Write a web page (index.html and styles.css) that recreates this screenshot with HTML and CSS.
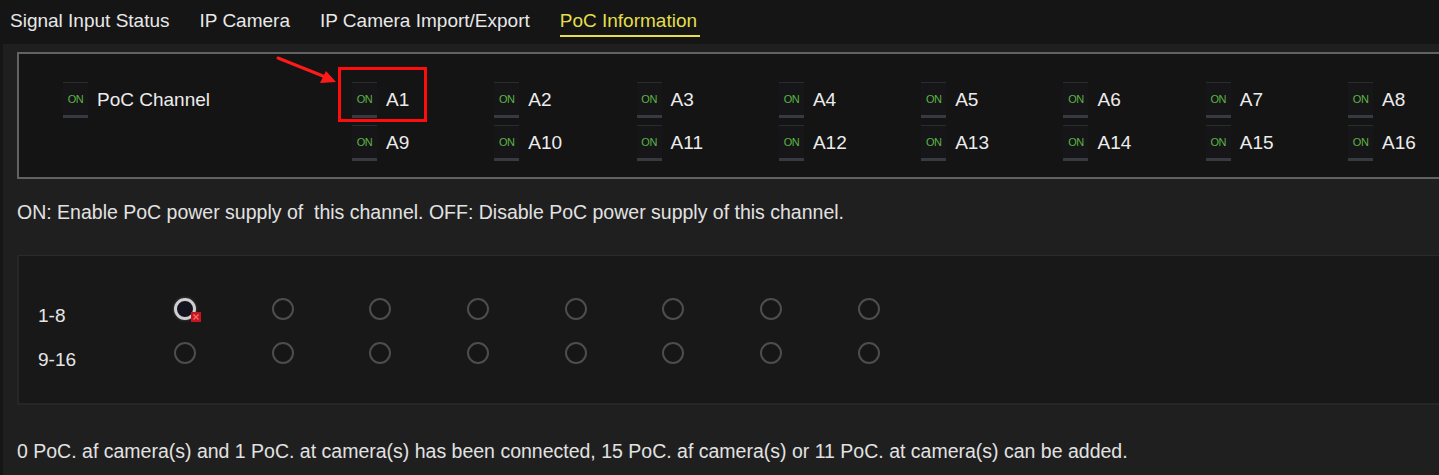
FILE: index.html
```html
<!DOCTYPE html>
<html>
<head>
<meta charset="utf-8">
<link rel="stylesheet" href="styles.css">
</head>
<body>
<div class="page">
  <div class="tabs">
    <span class="tab">Signal Input Status</span>
    <span class="tab">IP Camera</span>
    <span class="tab">IP Camera Import/Export</span>
    <span class="tab active">PoC Information</span>
  </div>
  <div class="content">
    <div class="chbox">
      <div class="chhead">
        <div class="item"><span class="tgl">ON</span><span class="lbl">PoC Channel</span></div>
      </div>
      <div class="chgrid">
        <div class="item"><span class="tgl">ON</span><span class="lbl">A1</span></div>
        <div class="item"><span class="tgl">ON</span><span class="lbl">A2</span></div>
        <div class="item"><span class="tgl">ON</span><span class="lbl">A3</span></div>
        <div class="item"><span class="tgl">ON</span><span class="lbl">A4</span></div>
        <div class="item"><span class="tgl">ON</span><span class="lbl">A5</span></div>
        <div class="item"><span class="tgl">ON</span><span class="lbl">A6</span></div>
        <div class="item"><span class="tgl">ON</span><span class="lbl">A7</span></div>
        <div class="item"><span class="tgl">ON</span><span class="lbl">A8</span></div>
        <div class="item"><span class="tgl">ON</span><span class="lbl">A9</span></div>
        <div class="item"><span class="tgl">ON</span><span class="lbl">A10</span></div>
        <div class="item"><span class="tgl">ON</span><span class="lbl">A11</span></div>
        <div class="item"><span class="tgl">ON</span><span class="lbl">A12</span></div>
        <div class="item"><span class="tgl">ON</span><span class="lbl">A13</span></div>
        <div class="item"><span class="tgl">ON</span><span class="lbl">A14</span></div>
        <div class="item"><span class="tgl">ON</span><span class="lbl">A15</span></div>
        <div class="item"><span class="tgl">ON</span><span class="lbl">A16</span></div>
      </div>
    </div>
    <p class="note">ON: Enable PoC power supply of &nbsp;this channel. OFF: Disable PoC power supply of this channel.</p>
    <div class="radiobox">
      <div class="rrow">
        <span class="rlbl">1-8</span>
        <span class="cell"><span class="radio sel"><svg class="xmark" width="10" height="10" viewBox="0 0 10 10"><rect x="0" y="0" width="10" height="10" fill="#c4161c"/><path d="M2.5 2.5 L7.5 7.5 M7.5 2.5 L2.5 7.5" stroke="#ff6a6a" stroke-width="1.4"/></svg></span></span>
        <span class="cell"><span class="radio"></span></span>
        <span class="cell"><span class="radio"></span></span>
        <span class="cell"><span class="radio"></span></span>
        <span class="cell"><span class="radio"></span></span>
        <span class="cell"><span class="radio"></span></span>
        <span class="cell"><span class="radio"></span></span>
        <span class="cell"><span class="radio"></span></span>
      </div>
      <div class="rrow">
        <span class="rlbl">9-16</span>
        <span class="cell"><span class="radio"></span></span>
        <span class="cell"><span class="radio"></span></span>
        <span class="cell"><span class="radio"></span></span>
        <span class="cell"><span class="radio"></span></span>
        <span class="cell"><span class="radio"></span></span>
        <span class="cell"><span class="radio"></span></span>
        <span class="cell"><span class="radio"></span></span>
        <span class="cell"><span class="radio"></span></span>
      </div>
    </div>
    <p class="status">0 PoC. af camera(s) and 1 PoC. at camera(s) has been connected, 15 PoC. af camera(s) or 11 PoC. at camera(s) can be added.</p>
  </div>
  <div class="hl-box"></div>
  <svg class="hl-arrow" width="80" height="40" viewBox="0 0 80 40">
    <line x1="2" y1="2" x2="52" y2="22" stroke="#ff1a1a" stroke-width="3" stroke-linecap="round"/>
    <polygon points="60,26 44,27 50,15" fill="#ff1a1a"/>
  </svg>
</div>
</body>
</html>
```
FILE: styles.css
```css
html, body {
  margin: 0;
  padding: 0;
  background: #1f1f1f;
  overflow: hidden;
}
.page {
  position: relative;
  width: 1439px;
  height: 475px;
  font-family: "Liberation Sans", Arial, sans-serif;
  color: #e6e6e6;
  border-left: 3px solid #151515;
  box-sizing: border-box;
}
.tabs {
  height: 44px;
  background: #151515;
  display: flex;
  gap: 30px;
  padding-left: 7px;
  box-sizing: border-box;
}
.tab {
  font-size: 19px;
  line-height: 24px;
  padding-top: 9px;
  height: 26px;
  color: #e8e8e8;
  white-space: nowrap;
}
.tab.active {
  color: #e3df4c;
  border-bottom: 2px solid #e3df4c;
  padding-right: 3px;
}
.content {
  padding-left: 14px;
}
.chbox {
  margin-top: 8px;
  margin-right: -20px;
  height: 127px;
  box-sizing: border-box;
  border: 2px solid #626262;
  background: #141414;
  display: flex;
  padding-top: 24px;
}
.chhead {
  width: 333px;
  padding-left: 44px;
  box-sizing: border-box;
  flex: none;
}
.chgrid {
  display: grid;
  grid-template-columns: repeat(8, 142.3px);
  grid-auto-rows: 43px;
}
.item {
  display: flex;
  align-items: center;
  height: 43px;
}
.tgl {
  width: 25px;
  height: 36px;
  box-sizing: border-box;
  border-top: 1px solid #2a2b2f;
  border-bottom: 3px solid #383a42;
  background: #161619;
  color: #5bb443;
  font-size: 11px;
  line-height: 32px;
  text-align: center;
  letter-spacing: -0.5px;
  flex: none;
}
.lbl {
  margin-left: 9px;
  font-size: 19px;
  color: #ececec;
  white-space: nowrap;
}
.note {
  margin: 22px 0 0 0;
  font-size: 19.5px;
  line-height: 22px;
  color: #e2e2e2;
  white-space: nowrap;
}
.radiobox {
  margin-top: 32px;
  margin-right: -20px;
  height: 150px;
  box-sizing: border-box;
  background: #181818;
  border-top: 1px solid #2a2a2a;
  border-left: 2px solid #262626;
  border-bottom: 2px solid #262626;
  padding-top: 31px;
  padding-left: 19px;
}
.rrow {
  display: flex;
  height: 44px;
}
.rlbl {
  width: 136px;
  flex: none;
  font-size: 19px;
  line-height: 22px;
  padding-top: 18px;
  color: #e6e6e6;
}
.cell {
  width: 97.7px;
  flex: none;
  padding-top: 11px;
}
.radio {
  position: relative;
  display: block;
  width: 22px;
  height: 22px;
  box-sizing: border-box;
  border: 2px solid #4d4d4d;
  border-radius: 50%;
  background: #161616;
}
.radio.sel {
  border: 3px solid #cfcfcf;
  background: #141420;
  box-shadow: 0 0 3px rgba(255,255,255,0.25);
}
.xmark {
  position: absolute;
  left: 14px;
  top: 11px;
}
.status {
  margin: 35px 0 0 0;
  font-size: 19.5px;
  line-height: 22px;
  color: #e2e2e2;
  white-space: nowrap;
}
.hl-box {
  position: absolute;
  left: 335px;
  top: 67px;
  width: 89px;
  height: 55px;
  box-sizing: border-box;
  border: 3px solid #ff0c0c;
}
.hl-arrow {
  position: absolute;
  left: 273px;
  top: 56px;
}
```
